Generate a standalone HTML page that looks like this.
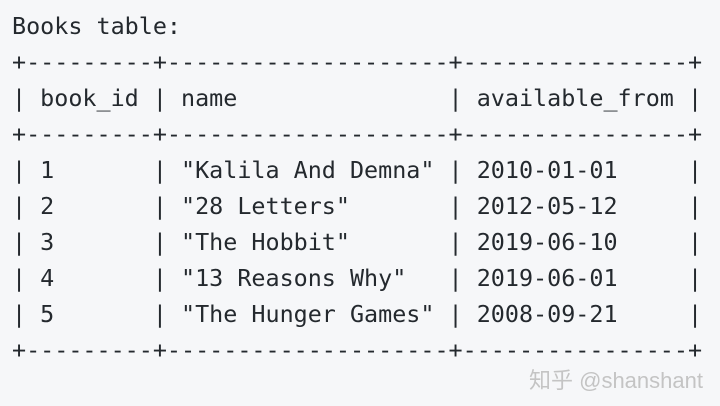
<!DOCTYPE html>
<html><head><meta charset="utf-8"><style>
html,body{margin:0;padding:0;}
body{width:720px;height:406px;background:#f6f7f9;overflow:hidden;position:relative;}
pre{margin:0;position:absolute;left:12px;top:8px;font-family:"DejaVu Sans Mono","Liberation Mono",monospace;font-size:23.4px;line-height:36px;color:#24292e;}
.wm{position:absolute;left:529px;top:363px;font-family:"Liberation Sans","Noto Sans CJK SC",sans-serif;font-size:22px;color:#c4c4c4;}
</style></head><body>
<pre>Books table:
+---------+--------------------+----------------+
| book_id | name               | available_from |
+---------+--------------------+----------------+
| 1       | "Kalila And Demna" | 2010-01-01     |
| 2       | "28 Letters"       | 2012-05-12     |
| 3       | "The Hobbit"       | 2019-06-10     |
| 4       | "13 Reasons Why"   | 2019-06-01     |
| 5       | "The Hunger Games" | 2008-09-21     |
+---------+--------------------+----------------+</pre>
<div class="wm">知乎 @shanshant</div>
</body></html>
